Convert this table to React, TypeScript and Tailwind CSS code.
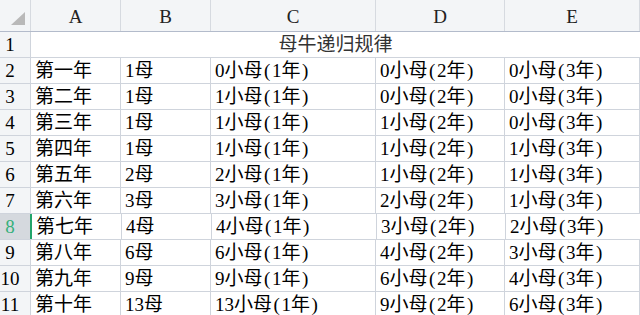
import React from 'react';

const cols = [
  { key: 'A', w: 'w-[90px]' },
  { key: 'B', w: 'w-[90px]' },
  { key: 'C', w: 'w-[165px]' },
  { key: 'D', w: 'w-[129px]' },
  { key: 'E', w: 'w-[135px]' },
];

const rows: string[][] = [
  ['第一年', '1母', '0小母(1年)', '0小母(2年)', '0小母(3年)'],
  ['第二年', '1母', '1小母(1年)', '0小母(2年)', '0小母(3年)'],
  ['第三年', '1母', '1小母(1年)', '1小母(2年)', '0小母(3年)'],
  ['第四年', '1母', '1小母(1年)', '1小母(2年)', '1小母(3年)'],
  ['第五年', '2母', '2小母(1年)', '1小母(2年)', '1小母(3年)'],
  ['第六年', '3母', '3小母(1年)', '2小母(2年)', '1小母(3年)'],
  ['第七年', '4母', '4小母(1年)', '3小母(2年)', '2小母(3年)'],
  ['第八年', '6母', '6小母(1年)', '4小母(2年)', '3小母(3年)'],
  ['第九年', '9母', '9小母(1年)', '6小母(2年)', '4小母(3年)'],
  ['第十年', '13母', '13小母(1年)', '9小母(2年)', '6小母(3年)'],
];

const font = { fontFamily: '"Liberation Serif", "Noto Sans CJK SC", serif' };

// SimSun draws brackets half-width, wider than Liberation's
function CellText({ text }: { text: string }) {
  const parts = text.split(/([()])/);
  return (
    <>
      {parts.map((p, i) =>
        p === '(' || p === ')' ? (
          <span key={i} className="inline-block w-[9.5px] text-center">
            {p}
          </span>
        ) : (
          <span key={i}>{p}</span>
        )
      )}
    </>
  );
}

export default function App() {
  const activeRow = 8;

  return (
    <div className="h-screen w-[640px] overflow-hidden bg-white text-[19px] text-black" style={font}>
      {/* column headers */}
      <div className="flex h-[32px] bg-[#f3f5f7] border-b border-[#b3bbcb]">
        <div className="w-[31px] shrink-0 border-r border-[#d6dae0] flex items-end justify-end pr-[5px] pb-[6px]">
          <svg width="14" height="13" viewBox="0 0 14 13">
            <polygon points="0,13 14,0 14,13" fill="#b9b9b9" />
          </svg>
        </div>
        {cols.map((c) => (
          <div
            key={c.key}
            className={`${c.w} shrink-0 border-r border-[#d6dae0] flex items-center justify-center pt-[4px] text-[#222]`}
          >
            {c.key}
          </div>
        ))}
      </div>

      {/* row 1 - merged title */}
      <div className="flex h-[26px] border-b border-[#cfd4dc]">
        <div className="w-[31px] shrink-0 bg-[#f3f5f7] border-r border-[#cfd4dc] flex items-center justify-center pr-[10px] pt-[2px]">
          1
        </div>
        <div className="flex-1 flex items-center justify-center pt-[2px] text-[#333]">母牛递归规律</div>
      </div>

      {rows.map((r, i) => {
        const n = i + 2;
        const active = n === activeRow;
        return (
          <div key={n} className="flex h-[26px] border-b border-[#cfd4dc]">
            <div
              className={`w-[31px] shrink-0 flex items-center justify-center pr-[10px] pt-[2px] border-r ${
                active
                  ? 'bg-[#d5d9de] text-[#34b07a] border-r-2 border-[#22a46a] w-[32px]'
                  : 'bg-[#f3f5f7] border-[#cfd4dc]'
              }`}
            >
              {n}
            </div>
            {r.map((v, j) => (
              <div
                key={j}
                className={`${cols[j].w} shrink-0 border-r ${
                  active && j === 4 ? 'border-[#22a46a]' : 'border-[#cfd4dc]'
                } ${active && j === 0 ? 'w-[89px]' : ''} flex items-center pl-[4px] pt-[2px] whitespace-nowrap overflow-hidden`}
              >
                <CellText text={v} />
              </div>
            ))}
          </div>
        );
      })}
    </div>
  );
}
